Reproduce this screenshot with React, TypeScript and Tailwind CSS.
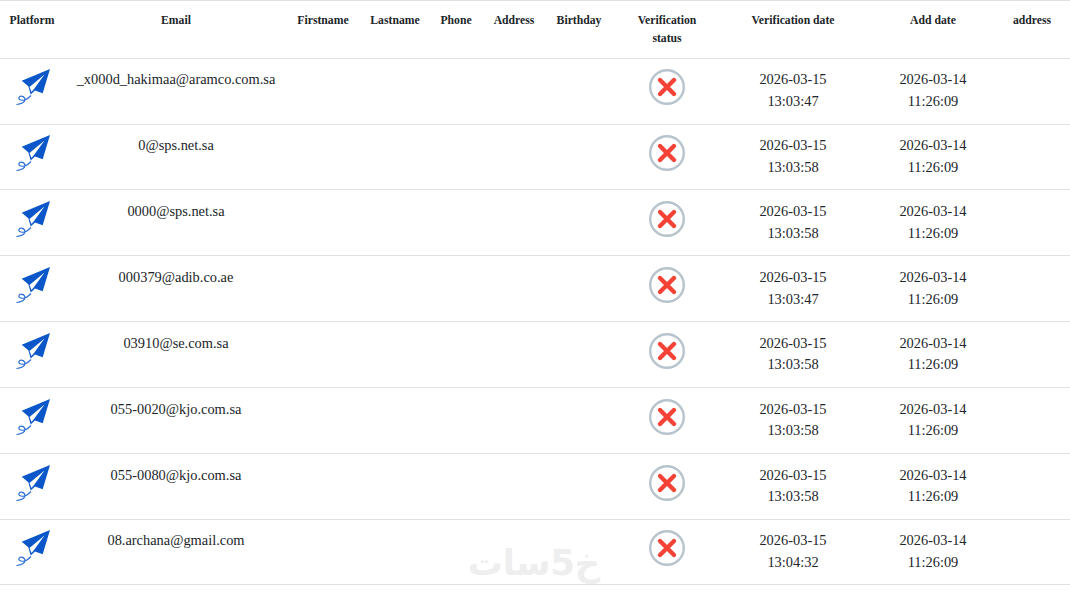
const ROWS = [
  { email: "_x000d_hakimaa@aramco.com.sa", verified: "13:03:47" },
  { email: "0@sps.net.sa", verified: "13:03:58" },
  { email: "0000@sps.net.sa", verified: "13:03:58" },
  { email: "000379@adib.co.ae", verified: "13:03:47" },
  { email: "03910@se.com.sa", verified: "13:03:58" },
  { email: "055-0020@kjo.com.sa", verified: "13:03:58" },
  { email: "055-0080@kjo.com.sa", verified: "13:03:58" },
  { email: "08.archana@gmail.com", verified: "13:04:32" },
];

const HEADERS = [
  "Platform",
  "Email",
  "Firstname",
  "Lastname",
  "Phone",
  "Address",
  "Birthday",
  "Verification status",
  "Verification date",
  "Add date",
  "address",
];

function PlaneIcon() {
  return (
    <svg width="36" height="36" viewBox="0 0 36 36" className="block" fill="none">
      <path d="M34 0 5.700 11.700l6.600 5.600 2.400 8.200 4.300-4 7.700 2.800z" fill="#0b57c9" />
      <path d="M28.500 5.500 13.500 18l2 5 2.700-3.200z" fill="#fff" />
      <path
        d="M.5 35.500C4 35 9 33.500 9 30.500 9 27.500 4 26 3 28.500 2 31 7 32 10 30.500c2-1 3.500-2.500 5-4"
        stroke="#2f6fd6"
        strokeWidth="1.200"
      />
    </svg>
  );
}

function CrossIcon() {
  return (
    <svg width="36" height="36" viewBox="0 0 36 36" className="block mx-auto" fill="none">
      <circle cx="18" cy="18" r="16.800" stroke="#b7c4cc" strokeWidth="2.400" />
      <path d="M11 11l14 14M25 11 11 25" stroke="#f44336" strokeWidth="4.400" strokeLinecap="round" />
    </svg>
  );
}

export default function App() {
  return (
    <div className="relative h-[591px] overflow-hidden bg-white font-['Liberation_Serif',serif] text-[#212529]">
      <table className="w-full table-fixed text-center text-[14.4px] leading-[21.6px]">
        <colgroup>
          <col className="w-[66px]" />
          <col className="w-[220px]" />
          <col className="w-[74px]" />
          <col className="w-[70px]" />
          <col className="w-[52px]" />
          <col className="w-[64px]" />
          <col className="w-[66px]" />
          <col className="w-[110px]" />
          <col className="w-[142px]" />
          <col className="w-[138px]" />
          <col className="w-[68px]" />
        </colgroup>
        <thead>
          <tr className="h-[57.67px] border-y border-[#dee2e6]">
            {HEADERS.map((h, i) => (
              <th
                key={h}
                className={`align-top pt-[11px] text-[11.7px] leading-[18px] font-bold ${i === 0 ? "pr-[2px]" : ""} ${i === 7 ? "px-[12px]" : ""} ${i === 10 ? "pl-[4px] pr-[12px]" : ""}`}
              >
                {h}
              </th>
            ))}
          </tr>
        </thead>
        <tbody>
          {ROWS.map((row) => (
            <tr key={row.email} className="h-[65.85px] border-b border-[#dee2e6] [&>td]:align-top [&>td]:pt-[10.8px]">
              <td>
                <div className="pl-[16px]">
                  <PlaneIcon />
                </div>
              </td>
              <td>{row.email}</td>
              <td />
              <td />
              <td />
              <td />
              <td />
              <td>
                <CrossIcon />
              </td>
              <td>
                2026-03-15
                <br />
                {row.verified}
              </td>
              <td>
                2026-03-14
                <br />
                11:26:09
              </td>
              <td />
            </tr>
          ))}
        </tbody>
      </table>
      <div
        dir="rtl"
        className="absolute left-[470px] top-[541px] w-[130px] text-center font-['DejaVu_Sans',sans-serif] text-[35px] leading-[44px] font-bold text-[#eeeeee]"
      >
        خ5سات
      </div>
    </div>
  );
}
